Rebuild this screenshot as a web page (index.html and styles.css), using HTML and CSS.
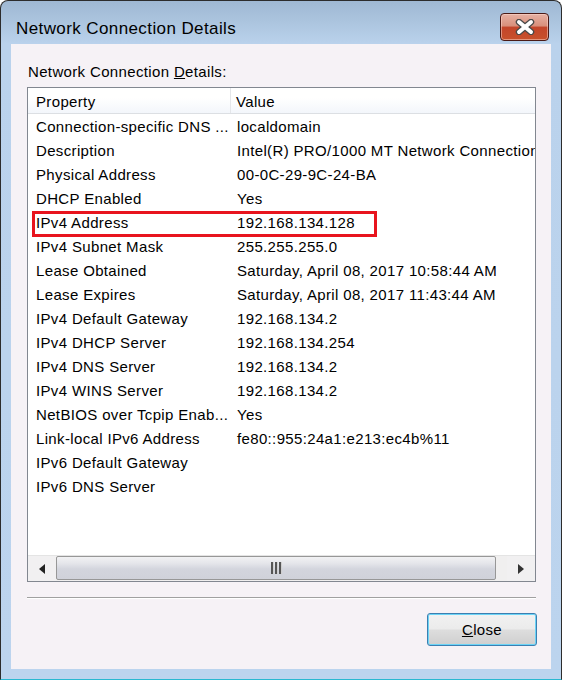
FILE: index.html
```html
<!DOCTYPE html>
<html>
<head>
<meta charset="utf-8">
<link rel="stylesheet" href="styles.css">
</head>
<body>
<div class="window">
  <div class="titlebar">
    <span class="title">Network Connection Details</span>
    <div class="closebtn">
      <svg width="22" height="16" viewBox="0 0 22 16">
        <g stroke-linecap="round">
          <line x1="5" y1="3" x2="17" y2="13" stroke="#4a4a4a" stroke-width="6.5"/>
          <line x1="17" y1="3" x2="5" y2="13" stroke="#4a4a4a" stroke-width="6.5"/>
          <line x1="5" y1="3" x2="17" y2="13" stroke="#ffffff" stroke-width="4"/>
          <line x1="17" y1="3" x2="5" y2="13" stroke="#ffffff" stroke-width="4"/>
        </g>
      </svg>
    </div>
  </div>
  <div class="client">
    <div class="label">Network Connection <u>D</u>etails:</div>
    <div class="listbox">
      <div class="header">
        <div class="hcell c1">Property</div>
        <div class="hcell c2">Value</div>
      </div>
      <div class="rows">
        <div class="row"><div class="cell c1">Connection-specific DNS ...</div><div class="cell c2">localdomain</div></div>
        <div class="row"><div class="cell c1">Description</div><div class="cell c2">Intel(R) PRO/1000 MT Network Connection</div></div>
        <div class="row"><div class="cell c1">Physical Address</div><div class="cell c2">00-0C-29-9C-24-BA</div></div>
        <div class="row"><div class="cell c1">DHCP Enabled</div><div class="cell c2">Yes</div></div>
        <div class="row"><div class="cell c1">IPv4 Address</div><div class="cell c2">192.168.134.128</div></div>
        <div class="row"><div class="cell c1">IPv4 Subnet Mask</div><div class="cell c2">255.255.255.0</div></div>
        <div class="row"><div class="cell c1">Lease Obtained</div><div class="cell c2">Saturday, April 08, 2017 10:58:44 AM</div></div>
        <div class="row"><div class="cell c1">Lease Expires</div><div class="cell c2">Saturday, April 08, 2017 11:43:44 AM</div></div>
        <div class="row"><div class="cell c1">IPv4 Default Gateway</div><div class="cell c2">192.168.134.2</div></div>
        <div class="row"><div class="cell c1">IPv4 DHCP Server</div><div class="cell c2">192.168.134.254</div></div>
        <div class="row"><div class="cell c1">IPv4 DNS Server</div><div class="cell c2">192.168.134.2</div></div>
        <div class="row"><div class="cell c1">IPv4 WINS Server</div><div class="cell c2">192.168.134.2</div></div>
        <div class="row"><div class="cell c1">NetBIOS over Tcpip Enab...</div><div class="cell c2">Yes</div></div>
        <div class="row"><div class="cell c1">Link-local IPv6 Address</div><div class="cell c2">fe80::955:24a1:e213:ec4b%11</div></div>
        <div class="row"><div class="cell c1">IPv6 Default Gateway</div><div class="cell c2"></div></div>
        <div class="row"><div class="cell c1">IPv6 DNS Server</div><div class="cell c2"></div></div>
      </div>
      <div class="hscroll">
        <div class="arrow left"><span class="tri-left"></span></div>
        <div class="track">
          <div class="thumb"><span class="grip"></span><span class="grip"></span><span class="grip"></span></div>
        </div>
        <div class="arrow right"><span class="tri-right"></span></div>
      </div>
      <div class="highlight"></div>
    </div>
    <div class="sep"></div>
    <div class="buttons">
      <div class="btn"><u>C</u>lose</div>
    </div>
  </div>
</div>
</body>
</html>
```

FILE: styles.css
```css
* { box-sizing: border-box; }
html, body { margin: 0; padding: 0; background: #ffffff; }
body {
  font-family: "Liberation Sans", Arial, sans-serif;
  font-size: 15px;
  letter-spacing: 0.35px;
  color: #000;
}
.window {
  width: 562px;
  height: 680px;
  border: 1px solid #2c2c2c;
  border-bottom-color: #2ab8d0;
  border-radius: 8px 8px 0 0;
  background: linear-gradient(to bottom, #9fb8d3 0px, #abc4de 20px, #bad2ec 43px, #bcd4ee 100%);
  display: flex;
  flex-direction: column;
  overflow: hidden;
}
.titlebar {
  height: 43px;
  display: flex;
  align-items: flex-start;
  padding: 0 12px 0 15px;
  flex: none;
}
.title {
  margin-top: 18px;
  line-height: 20px;
  font-size: 17px;
  letter-spacing: 0.4px;
  flex: 1;
  color: #000;
}
.closebtn {
  margin-top: 12px;
  width: 49px;
  height: 28px;
  border: 1px solid #4a1a16;
  border-radius: 4px;
  background: linear-gradient(to bottom, #e6b1a4 0%, #d9907c 45%, #c3452a 52%, #c8512c 100%);
  display: flex;
  align-items: center;
  justify-content: center;
  box-shadow: inset 0 0 0 1px rgba(255,220,210,0.5);
}
.client {
  flex: 1;
  margin: 0 10px 10px 10px;
  background: #f6f2f6;
  padding: 0 15px 0 16px;
  display: flex;
  flex-direction: column;
}
.label {
  margin-top: 19px;
  line-height: 18px;
  padding-left: 1px;
}
.listbox {
  position: relative;
  margin-top: 6px;
  height: 495px;
  border: 1px solid #828790;
  background: #ffffff;
  display: flex;
  flex-direction: column;
  overflow: hidden;
}
.header {
  height: 26px;
  flex: none;
  display: flex;
  background: linear-gradient(to bottom, #ffffff 0%, #ffffff 40%, #f3f6fb 100%);
  border-bottom: 1px solid #dcdfe3;
}
.hcell {
  line-height: 25px;
  padding-top: 1px;
  white-space: nowrap;
}
.c1 { width: 203px; padding-left: 8px; flex: none; }
.c2 { flex: 1; padding-left: 6px; white-space: nowrap; overflow: hidden; }
.hcell.c1 { border-right: 1px solid #e4e6ea; }
.hcell.c2 { padding-left: 5px; }
.rows {
  flex: 1;
  padding-top: 1px;
}
.row {
  display: flex;
  height: 24px;
  line-height: 24px;
}
.cell { white-space: nowrap; overflow: hidden; }
.hscroll {
  flex: none;
  height: 26px;
  display: flex;
  background: #efefef;
  border-top: 1px solid #e4e4e4;
}
.arrow {
  width: 28px;
  flex: none;
  display: flex;
  align-items: center;
  justify-content: center;
  background: #f1f0f1;
}
.tri-left {
  width: 0; height: 0;
  border-top: 5px solid transparent;
  border-bottom: 5px solid transparent;
  border-right: 6px solid #222;
}
.tri-right {
  width: 0; height: 0;
  border-top: 5px solid transparent;
  border-bottom: 5px solid transparent;
  border-left: 6px solid #333;
}
.track {
  flex: 1;
  display: flex;
  padding-right: 11px;
  background: #f0efef;
}
.thumb {
  flex: 1;
  height: 24px;
  border: 1px solid #979797;
  border-radius: 2px;
  background: linear-gradient(to bottom, #f2f2f4 0%, #e4e5ea 30%, #d3d5dd 55%, #d0d2da 100%);
  display: flex;
  align-items: center;
  justify-content: center;
  gap: 1px;
}
.grip {
  width: 3px;
  height: 12px;
  background: #555;
  border-right: 1px solid #cfcfcf;
}
.highlight {
  position: absolute;
  left: 4px;
  top: 123px;
  width: 345px;
  height: 26px;
  border: 3px solid #e8141e;
}
.sep {
  margin-top: 15px;
  height: 2px;
  border-top: 1px solid #a0a0a0;
  border-bottom: 1px solid #ffffff;
}
.buttons {
  display: flex;
  justify-content: flex-end;
  margin-top: 14px;
  margin-right: -1px;
}
.btn {
  width: 110px;
  height: 33px;
  border: 1px solid #3c7fb1;
  border-radius: 3px;
  background: linear-gradient(to bottom, #f2f2f2 0%, #ebebeb 48%, #dddddd 52%, #cfcfcf 100%);
  box-shadow: inset 0 0 0 1px #6bd4f6;
  display: flex;
  align-items: center;
  justify-content: center;
  line-height: 18px;
}
```
